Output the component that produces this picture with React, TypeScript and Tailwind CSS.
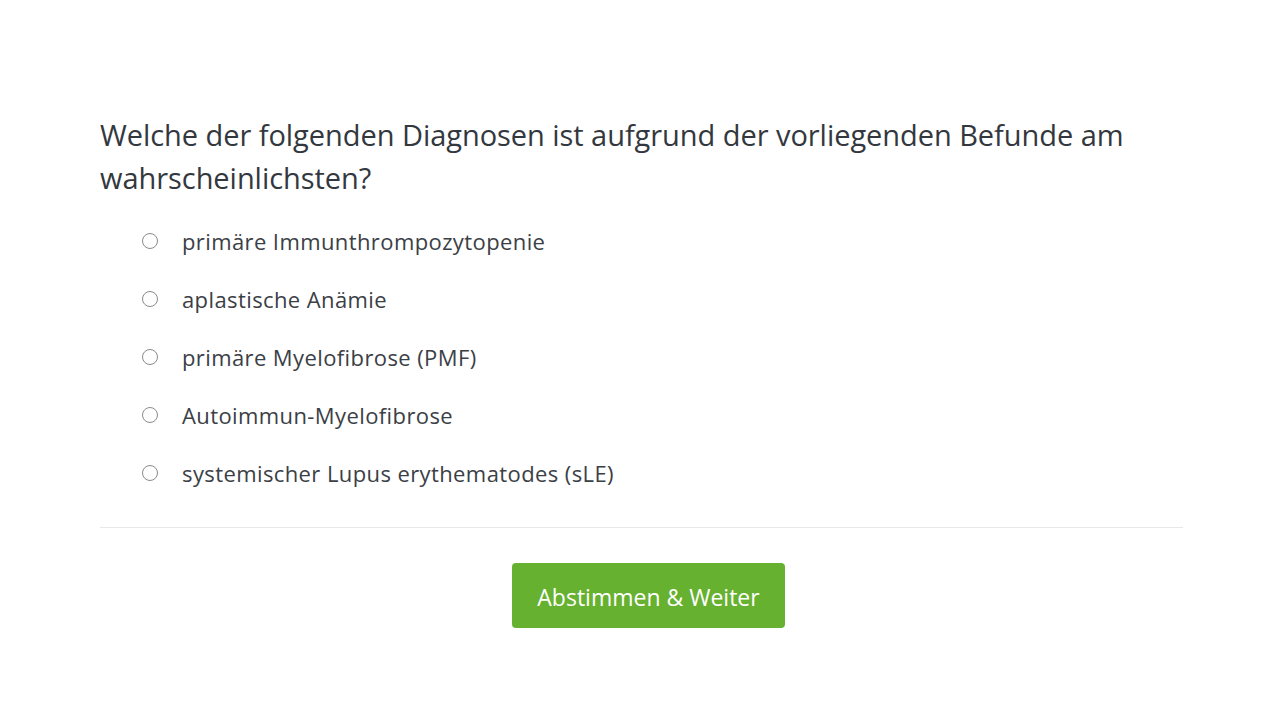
import { useState } from "react";

const options = [
  "primäre Immunthrompozytopenie",
  "aplastische Anämie",
  "primäre Myelofibrose (PMF)",
  "Autoimmun-Myelofibrose",
  "systemischer Lupus erythematodes (sLE)",
];

export default function App() {
  const [selected, setSelected] = useState<number | null>(null);

  return (
    <div
      className="min-h-screen w-full bg-white text-[#3b4046]"
      style={{ fontFamily: '"Open Sans", "Liberation Sans", sans-serif' }}
    >
      <div className="mx-[100px] pt-[113px]">
        {/* Frage */}
        <h2 className="text-[29px] leading-[43px] font-normal tracking-[-0.05px] text-[#33383e]">
          Welche der folgenden Diagnosen ist aufgrund der vorliegenden Befunde am wahrscheinlichsten?
        </h2>

        {/* Antworten */}
        <div className="mt-[13px] pl-[42px] flex flex-col">
          {options.map((opt, i) => (
            <label
              key={opt}
              className="flex items-center h-[58px] cursor-pointer"
              onClick={() => setSelected(i)}
            >
              <span className="w-[16px] h-[16px] rounded-full border border-[#8a8a8a] flex items-center justify-center">
                {selected === i && <span className="w-[8px] h-[8px] rounded-full bg-[#3b4046]" />}
              </span>
              <span className="ml-[24px] text-[22px] tracking-[0.4px] text-[#3b4046]">{opt}</span>
            </label>
          ))}
        </div>

        <div className="mt-[25px] mr-[-3px] border-t border-[#e8e8e8]" />

        <div className="flex justify-center pt-[35px]">
          <button className="ml-[17px] w-[273px] h-[65px] pt-[3px] rounded-[4px] bg-[#66b12f] text-white text-[23px] font-medium tracking-[0px]">
            Abstimmen &amp; Weiter
          </button>
        </div>
      </div>
    </div>
  );
}
